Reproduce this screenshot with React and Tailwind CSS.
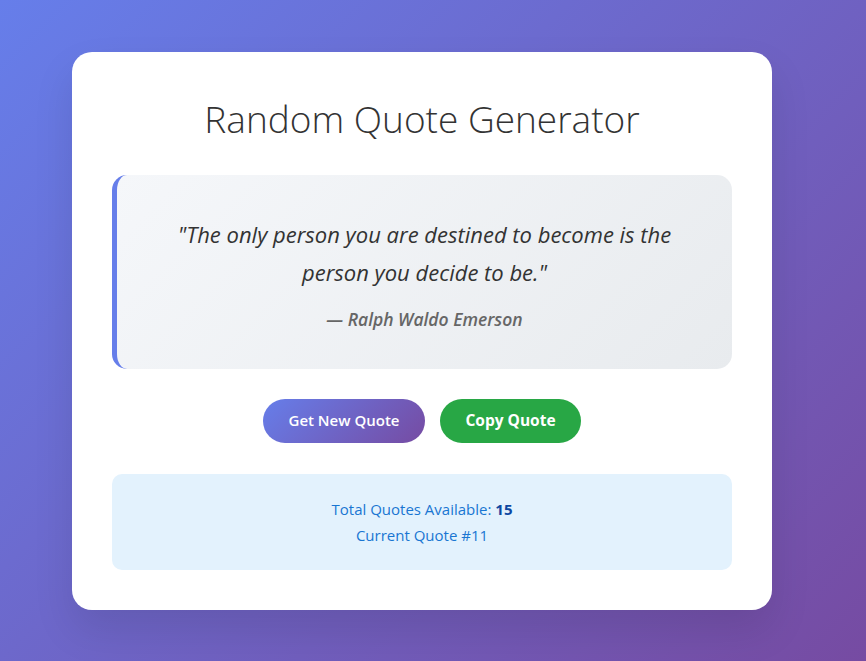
export default function App() {
  return (
    <div
      className="min-h-screen w-full flex items-center justify-center pr-[22px] bg-[linear-gradient(135deg,#667eea_0%,#764ba2_100%)]"
      style={{ fontFamily: '"Open Sans", "Noto Sans", sans-serif' }}
    >
      <div className="w-[700px] bg-white rounded-[20px] p-10 shadow-[0_20px_40px_rgba(0,0,0,0.1)] text-center">
        <h1 className="text-[37px] leading-[48px] font-light text-[#333] mb-[32px] mt-[3px]">
          Random Quote Generator
        </h1>
        <div className="rounded-[15px] border-l-[5px] border-[#667eea] bg-[linear-gradient(135deg,#f5f7fa_0%,#e8ebee_100%)] px-10 pt-10 pb-9">
          <p className="italic text-[22px] leading-[38px] text-[#333]">
            "The only person you are destined to become is the person you decide to be."
          </p>
          <p className="mt-[15px] italic font-semibold text-[17.5px] leading-[27px] text-[#666]">
            — Ralph Waldo Emerson
          </p>
        </div>
        <div className="flex justify-center gap-[15px] mt-[30px]">
          <button className="h-[44px] w-[162px] rounded-full text-white text-[15px] font-semibold bg-[linear-gradient(135deg,#667eea_0%,#764ba2_100%)]">
            Get New Quote
          </button>
          <button className="h-[44px] w-[141px] rounded-full text-white text-[15.5px] font-bold bg-[#28a745]">
            Copy Quote
          </button>
        </div>
        <div className="mt-[31px] rounded-[10px] bg-[#e3f2fd] text-[#1976d2] text-[15px] leading-[26px] pt-[22px] pb-[22px]">
          <div>
            Total Quotes Available: <span className="font-bold text-[#0d47a1]">15</span>
          </div>
          <div>Current Quote #11</div>
        </div>
      </div>
    </div>
  );
}
